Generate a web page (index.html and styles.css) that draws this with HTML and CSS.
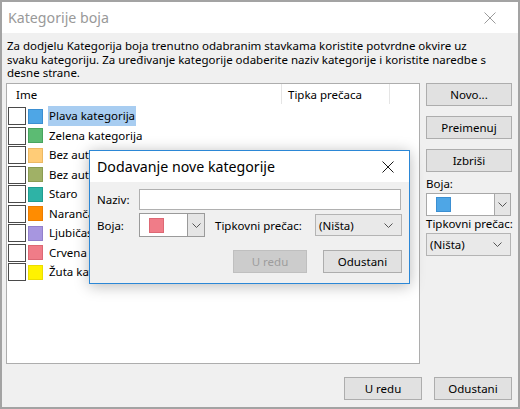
FILE: index.html
```html
<!DOCTYPE html>
<html lang="hr">
<head>
<meta charset="utf-8">
<title>Kategorije boja</title>
<link rel="stylesheet" href="styles.css">
</head>
<body>
<div class="window">
  <div class="titlebar">
    <span class="title">Kategorije boja</span>
    <svg class="close" width="12" height="12" viewBox="0 0 12 12"><path d="M0.5 0.5 L11.5 11.5 M11.5 0.5 L0.5 11.5" stroke="#9a9a9a" stroke-width="1" fill="none"/></svg>
  </div>
  <div class="content">
    <p class="intro">Za dodjelu Kategorija boja trenutno odabranim stavkama koristite potvrdne okvire uz<br>svaku kategoriju. Za uređivanje kategorije odaberite naziv kategorije i koristite naredbe s<br>desne strane.</p>
    <div class="main">
      <div class="list">
        <div class="list-head">
          <div class="col-name">Ime</div>
          <div class="col-key">Tipka prečaca</div>
          <div class="col-rest"></div>
        </div>
        <div class="rows">
          <div class="row"><span class="check"></span><span class="swatch sw-blue"></span><span class="label selected">Plava kategorija</span></div>
          <div class="row"><span class="check"></span><span class="swatch sw-green"></span><span class="label">Zelena kategorija</span></div>
          <div class="row"><span class="check"></span><span class="swatch sw-peach"></span><span class="label">Bez automatske kategorije</span></div>
          <div class="row"><span class="check"></span><span class="swatch sw-olive"></span><span class="label">Bez automatske kategorije</span></div>
          <div class="row"><span class="check"></span><span class="swatch sw-teal"></span><span class="label">Staro</span></div>
          <div class="row"><span class="check"></span><span class="swatch sw-orange"></span><span class="label">Narančasta kategorija</span></div>
          <div class="row"><span class="check"></span><span class="swatch sw-purple"></span><span class="label">Ljubičasta kategorija</span></div>
          <div class="row"><span class="check"></span><span class="swatch sw-red"></span><span class="label">Crvena kategorija</span></div>
          <div class="row"><span class="check"></span><span class="swatch sw-yellow"></span><span class="label">Žuta kategorija</span></div>
        </div>
      </div>
      <div class="side">
        <button class="btn side-btn">Novo...</button>
        <button class="btn side-btn">Preimenuj</button>
        <button class="btn side-btn">Izbriši</button>
        <div class="side-label">Boja:</div>
        <div class="combo color-combo">
          <span class="combo-value"><span class="swatch sw-blue"></span></span>
          <span class="combo-drop"><svg width="9" height="5" viewBox="0 0 9 5"><path d="M0.5 0.5 L4.5 4.5 L8.5 0.5" stroke="#555" fill="none"/></svg></span>
        </div>
        <div class="side-label">Tipkovni prečac:</div>
        <div class="combo select-combo">
          <span class="select-text">(Ništa)</span>
          <svg width="9" height="5" viewBox="0 0 9 5"><path d="M0.5 0.5 L4.5 4.5 L8.5 0.5" stroke="#555" fill="none"/></svg>
        </div>
      </div>
    </div>
    <div class="footer">
      <button class="btn foot-btn">U redu</button>
      <button class="btn foot-btn">Odustani</button>
    </div>
  </div>

  <div class="dialog">
    <div class="dlg-titlebar">
      <span class="dlg-title">Dodavanje nove kategorije</span>
      <svg class="dlg-close" width="12" height="12" viewBox="0 0 12 12"><path d="M0.5 0.5 L11.5 11.5 M11.5 0.5 L0.5 11.5" stroke="#1a1a1a" stroke-width="1" fill="none"/></svg>
    </div>
    <div class="dlg-body">
      <div class="dlg-row">
        <span class="dlg-label">Naziv:</span>
        <span class="text-input"></span>
      </div>
      <div class="dlg-row row2">
        <span class="dlg-label">Boja:</span>
        <div class="combo dlg-color">
          <span class="combo-value"><span class="swatch sw-red"></span></span>
          <span class="combo-drop"><svg width="9" height="5" viewBox="0 0 9 5"><path d="M0.5 0.5 L4.5 4.5 L8.5 0.5" stroke="#555" fill="none"/></svg></span>
        </div>
        <span class="dlg-label2">Tipkovni prečac:</span>
        <div class="combo select-combo dlg-select">
          <span class="select-text">(Ništa)</span>
          <svg width="9" height="5" viewBox="0 0 9 5"><path d="M0.5 0.5 L4.5 4.5 L8.5 0.5" stroke="#555" fill="none"/></svg>
        </div>
      </div>
      <div class="dlg-buttons">
        <button class="btn dlg-ok" disabled>U redu</button>
        <button class="btn dlg-cancel">Odustani</button>
      </div>
    </div>
  </div>
</div>
</body>
</html>
```

FILE: styles.css
```css
* { box-sizing: border-box; }
html, body { margin: 0; padding: 0; }
body {
  width: 520px;
  height: 409px;
  overflow: hidden;
  font-family: "Noto Sans", "Open Sans", sans-serif;
  font-size: 11.5px;
  color: #000;
  background: #fff;
}
.window {
  position: relative;
  width: 520px;
  height: 409px;
  border: 2px solid #a3a3a3;
  background: #f0f0f0;
  display: flex;
  flex-direction: column;
}
.titlebar {
  height: 31px;
  background: #fff;
  display: flex;
  align-items: center;
  justify-content: space-between;
  padding: 0 22px 0 6px;
  flex: none;
}
.title {
  font-size: 14.2px;
  color: #999;
}
.close { display: block; }
.content {
  flex: 1;
  display: flex;
  flex-direction: column;
  padding: 6px 6px 7px 4px;
}
.intro {
  margin: 0 0 3.5px 1px;
  line-height: 13.5px;
  height: 40.5px;
  white-space: nowrap;
}
.main {
  display: flex;
  gap: 6px;
  height: 281px;
}
.list {
  flex: 1;
  background: #fff;
  border: 1px solid #adadad;
  display: flex;
  flex-direction: column;
}
.list-head {
  display: flex;
  height: 20px;
  align-items: stretch;
}
.list-head > div {
  display: flex;
  align-items: center;
}
.col-name { width: 275px; padding-left: 9px; border-right: 1px solid #e5e5e5; }
.col-key { width: 108px; padding-left: 6px; border-right: 1px solid #e5e5e5; }
.col-rest { flex: 1; }
.rows {
  padding-top: 2.5px;
  padding-left: 1px;
}
.row {
  height: 19.5px;
  display: flex;
  align-items: center;
}
.check {
  width: 18px;
  height: 18px;
  border: 1px solid #4a4a4a;
  background: #fff;
  flex: none;
}
.swatch {
  display: inline-block;
  width: 15px;
  height: 15px;
  border: 1px solid;
  flex: none;
}
.row .swatch { margin-left: 2px; }
.label {
  margin-left: 5px;
  padding: 0 1px;
  line-height: 20px;
  white-space: nowrap;
}
.label.selected { background: #a8cdf1; }
.sw-blue { background: #4ea6e6; border-color: #3b8fd2; }
.sw-green { background: #5cbb73; border-color: #47a45f; }
.sw-peach { background: #ffcc77; border-color: #ecb862; }
.sw-olive { background: #a0b166; border-color: #8b9c52; }
.sw-teal { background: #2eb3a6; border-color: #1f9d91; }
.sw-orange { background: #ff8c00; border-color: #ec7d00; }
.sw-purple { background: #a796e0; border-color: #9280cc; }
.sw-red { background: #f07c88; border-color: #dd6874; }
.sw-yellow { background: #fff200; border-color: #ebdd00; }

.side {
  width: 86px;
  display: flex;
  flex-direction: column;
}
.btn {
  font-family: inherit;
  font-size: 11.5px;
  color: #000;
  background: #e1e1e1;
  border: 1px solid #adadad;
  padding: 0;
  height: 23px;
  margin: 0;
}
.side-btn { width: 86px; margin-bottom: 10px; }
.side-btn:nth-child(3) { margin-bottom: 4px; }
.side-label {
  line-height: 16px;
  padding-left: 0;
  margin-bottom: 1px;
  white-space: nowrap;
}
.side-label:nth-of-type(2) { margin-top: 4px; margin-bottom: 2px; }
.combo {
  display: flex;
  align-items: stretch;
  border: 1px solid #a8a8a8;
  height: 23px;
}
.combo-value {
  flex: 1;
  background: #fff;
  display: flex;
  align-items: center;
  padding-left: 9px;
}
.combo-drop {
  width: 16px;
  background: #e5e5e5;
  border-left: 1px solid #a8a8a8;
  display: flex;
  align-items: center;
  justify-content: center;
}
.combo-drop svg, .select-combo svg { display: block; }
.color-combo { width: 85px; }
.select-combo {
  width: 85px;
  background: #e9e9e9;
  border-color: #b4b4b4;
  align-items: center;
  justify-content: space-between;
  padding: 0 8px 0 3px;
}
.footer {
  margin-top: 13px;
  display: flex;
  justify-content: flex-end;
  gap: 12px;
}
.foot-btn { width: 78px; }

/* dialog window overlaying the main window */
.dialog {
  position: absolute;
  left: 87px;
  top: 148px;
  width: 321px;
  height: 134px;
  border: 1px solid #2b87d6;
  background: #f0f0f0;
  box-shadow: 0 2px 14px rgba(0, 0, 0, 0.28);
  display: flex;
  flex-direction: column;
}
.dlg-titlebar {
  height: 31px;
  background: #fff;
  display: flex;
  align-items: center;
  justify-content: space-between;
  padding: 0 15px 0 7px;
  flex: none;
}
.dlg-title { font-size: 14.2px; color: #000; }
.dlg-close { display: block; }
.dlg-body {
  padding: 7px 7px 0 7px;
}
.dlg-row {
  display: flex;
  align-items: center;
}
.dlg-label { width: 42px; flex: none; }
.text-input {
  width: 262px;
  height: 21px;
  background: #fff;
  border: 1px solid #b0b0b0;
}
.row2 { margin-top: 3px; height: 24px; }
.dlg-color { width: 66px; height: 24px; border-color: #9a9a9a; }
.dlg-color .combo-drop { border-left-color: #9a9a9a; width: 17px; }
.dlg-label2 { margin-left: 10px; white-space: nowrap; }
.dlg-select { width: 87px; height: 22px; margin-left: auto; margin-right: 0; }
.dlg-buttons {
  margin-top: 13px;
  display: flex;
  justify-content: flex-end;
  gap: 16px;
}
.dlg-ok {
  width: 74px;
  background: #cccccc;
  border-color: #bfbfbf;
  color: #9d9d9d;
}
.dlg-cancel { width: 79px; }
```
